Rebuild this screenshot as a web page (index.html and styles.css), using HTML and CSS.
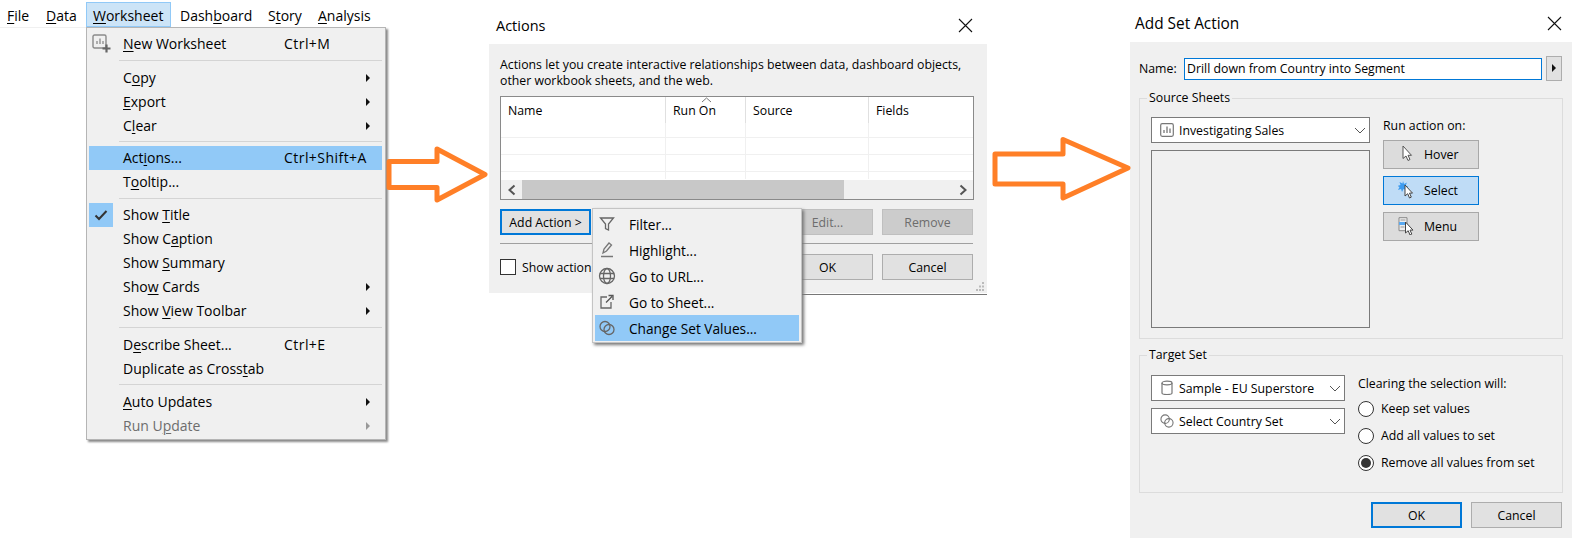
FILE: index.html
```html
<!DOCTYPE html>
<html lang="en">
<head>
<meta charset="utf-8">
<title>Add Set Action</title>
<link rel="stylesheet" href="styles.css">
</head>
<body>
<div class="canvas">

  <section class="app">
    <nav class="menubar">
      <span class="mb-item"><u>F</u>ile</span>
      <span class="mb-item"><u>D</u>ata</span>
      <span class="mb-item mb-active"><u>W</u>orksheet</span>
      <span class="mb-item">Dash<u>b</u>oard</span>
      <span class="mb-item">S<u>t</u>ory</span>
      <span class="mb-item"><u>A</u>nalysis</span>
    </nav>
    <div class="menu">
      <div class="mi">
        <svg class="mi-icon" width="20" height="20" viewBox="0 0 20 20"><rect x="1" y="1" width="13" height="13" rx="1.5" fill="none" stroke="#8a8a8a" stroke-width="1.4"/><path d="M5 10V7M8 10V4.5M11 10V7" stroke="#8a8a8a" stroke-width="1.3"/><path d="M14.5 10.5v8M10.5 14.5h8" stroke="#666" stroke-width="2.2"/></svg>
        <span class="mi-label"><u>N</u>ew Worksheet</span><span class="mi-key">Ctrl+M</span>
      </div>
      <div class="sep"></div>
      <div class="mi"><span class="mi-label">C<u>o</u>py</span><span class="mi-key"></span><i class="sub"></i></div>
      <div class="mi"><span class="mi-label"><u>E</u>xport</span><span class="mi-key"></span><i class="sub"></i></div>
      <div class="mi"><span class="mi-label">C<u>l</u>ear</span><span class="mi-key"></span><i class="sub"></i></div>
      <div class="sep sep-a"></div>
      <div class="mi mi-hot"><span class="mi-label">Act<u>i</u>ons...</span><span class="mi-key">Ctrl+Shift+A</span></div>
      <div class="mi"><span class="mi-label">T<u>o</u>oltip...</span></div>
      <div class="sep sep-b"></div>
      <div class="mi">
        <span class="mi-check"><svg width="14" height="12" viewBox="0 0 14 12"><path d="M1.5 6.5l3.5 3.5 7.5-8" fill="none" stroke="#333" stroke-width="2"/></svg></span>
        <span class="mi-label">Show <u>T</u>itle</span>
      </div>
      <div class="mi"><span class="mi-label">Show C<u>a</u>ption</span></div>
      <div class="mi"><span class="mi-label">Show <u>S</u>ummary</span></div>
      <div class="mi"><span class="mi-label">Sho<u>w</u> Cards</span><span class="mi-key"></span><i class="sub"></i></div>
      <div class="mi"><span class="mi-label">Show <u>V</u>iew Toolbar</span><span class="mi-key"></span><i class="sub"></i></div>
      <div class="sep"></div>
      <div class="mi"><span class="mi-label">D<u>e</u>scribe Sheet...</span><span class="mi-key">Ctrl+E</span></div>
      <div class="mi"><span class="mi-label">Duplicate as Cross<u>t</u>ab</span></div>
      <div class="sep sep-c"></div>
      <div class="mi"><span class="mi-label"><u>A</u>uto Updates</span><span class="mi-key"></span><i class="sub"></i></div>
      <div class="mi mi-off"><span class="mi-label">Run U<u>p</u>date</span><span class="mi-key"></span><i class="sub"></i></div>
    </div>
  </section>

  <section class="win win-actions">
    <header class="titlebar">
      <h1 class="title">Actions</h1>
      <svg class="close" width="15" height="15" viewBox="0 0 15 15"><path d="M1 1l13 13M14 1L1 14" stroke="#111" stroke-width="1.1"/></svg>
    </header>
    <div class="panel panel-actions">
      <p class="intro">Actions let you create interactive relationships between data, dashboard objects,<br>other workbook sheets, and the web.</p>
      <div class="table">
        <div class="t-row t-head">
          <span class="t-cell">Name</span>
          <span class="t-cell t-sorted">Run On<svg class="caret" width="11" height="6" viewBox="0 0 11 6"><path d="M1 5l4.5-4 4.5 4" fill="none" stroke="#777"/></svg></span>
          <span class="t-cell">Source</span>
          <span class="t-cell t-last">Fields</span>
        </div>
        <div class="t-row t-r1"><span class="t-cell"></span><span class="t-cell"></span><span class="t-cell"></span><span class="t-cell t-last"></span></div>
        <div class="t-row t-r2"><span class="t-cell"></span><span class="t-cell"></span><span class="t-cell"></span><span class="t-cell t-last"></span></div>
        <div class="t-row t-r2"><span class="t-cell"></span><span class="t-cell"></span><span class="t-cell"></span><span class="t-cell t-last"></span></div>
        <div class="t-row t-r3"><span class="t-cell"></span><span class="t-cell"></span><span class="t-cell"></span><span class="t-cell t-last"></span></div>
        <div class="scrollbar">
          <span class="sb-btn"><svg width="10" height="12" viewBox="0 0 10 12"><path d="M7.5 1.5L2.5 6l5 4.5" fill="none" stroke="#555" stroke-width="2"/></svg></span>
          <span class="sb-thumb"></span>
          <span class="sb-btn sb-end"><svg width="10" height="12" viewBox="0 0 10 12"><path d="M2.5 1.5L7.5 6l-5 4.5" fill="none" stroke="#555" stroke-width="2"/></svg></span>
        </div>
      </div>
      <div class="btn-row">
        <button class="btn btn-focus">Add Action &gt;</button>
        <button class="btn btn-off btn-push">Edit...</button>
        <button class="btn btn-off">Remove</button>
      </div>
      <div class="rule"></div>
      <div class="btn-row btn-row-foot">
        <span class="check-box"></span><span class="check-label">Show action</span>
        <button class="btn btn-push">OK</button>
        <button class="btn">Cancel</button>
      </div>
      <svg class="grip" width="12" height="12" viewBox="0 0 12 12"><path d="M8 1h2v2H8zM5 4.500h2v2H5zM8 4.500h2v2H8zM2 8h2v2H2zM5 8h2v2H5zM8 8h2v2H8z" fill="#bbb"/></svg>
      <div class="edge-line"></div>
    </div>
    <div class="popup">
      <div class="pi">
        <svg class="pi-icon" width="18" height="18" viewBox="0 0 18 18"><path d="M2.500 3h13l-5 6v6l-3-1.500V9z" fill="none" stroke="#666" stroke-width="1.300"/></svg>
        <span>Filter...</span>
      </div>
      <div class="pi">
        <svg class="pi-icon" width="18" height="18" viewBox="0 0 18 18"><path d="M5 12l1-4 5-6 2.500 2-5 6zM3 15.500h12" fill="none" stroke="#777" stroke-width="1.300"/></svg>
        <span>Highlight...</span>
      </div>
      <div class="pi">
        <svg class="pi-icon" width="18" height="18" viewBox="0 0 18 18"><g fill="none" stroke="#666" stroke-width="1.300"><circle cx="9" cy="9" r="7.500"/><ellipse cx="9" cy="9" rx="3.500" ry="7.500"/><path d="M2 6.500h14M2 11.500h14"/></g></svg>
        <span>Go to URL...</span>
      </div>
      <div class="pi">
        <svg class="pi-icon" width="18" height="18" viewBox="0 0 18 18"><path d="M9 4H3v11h10V9" fill="none" stroke="#666" stroke-width="1.300"/><path d="M8 9.500L14 3.500M10.500 2.500h4.500V7" fill="none" stroke="#555" stroke-width="1.300"/></svg>
        <span>Go to Sheet...</span>
      </div>
      <div class="pi pi-hot">
        <svg class="pi-icon" width="18" height="18" viewBox="0 0 18 18"><g fill="none" stroke="#666" stroke-width="1.300"><circle cx="7" cy="7.500" r="5"/><circle cx="11" cy="10.500" r="5"/></g></svg>
        <span>Change Set Values...</span>
      </div>
    </div>
  </section>

  <section class="win win-set">
    <header class="titlebar titlebar-set">
      <h1 class="title title-set">Add Set Action</h1>
      <svg class="close" width="15" height="15" viewBox="0 0 15 15"><path d="M1 1l13 13M14 1L1 14" stroke="#111" stroke-width="1.100"/></svg>
    </header>
    <div class="panel panel-set">
      <div class="name-row">
        <label class="name-label">Name:</label>
        <span class="name-input">Drill down from Country into Segment</span>
        <span class="name-btn"></span>
      </div>

      <fieldset class="group group-source">
        <legend>Source Sheets</legend>
        <div class="source-left">
          <div class="select select-wide">
            <svg class="sel-icon" width="14" height="14" viewBox="0 0 14 14"><rect x=".7" y=".7" width="12.600" height="12.600" rx="1.500" fill="none" stroke="#777" stroke-width="1.200"/><path d="M4 10V7M7 10V3.500M10 10V5.500" stroke="#777" stroke-width="1.300"/></svg>
            <span class="sel-text">Investigating Sales</span>
            <svg class="chev" width="12" height="7" viewBox="0 0 12 7"><path d="M1 1l5 5 5-5" fill="none" stroke="#555"/></svg>
          </div>
          <div class="listbox"></div>
        </div>
        <div class="source-right">
          <div class="run-label">Run action on:</div>
          <div class="run-btn">
            <svg class="run-icon" width="18" height="18" viewBox="0 0 18 18"><path d="M5 1v12.500l3-2.500 2 4.500 2-1-2-4.200h3.500z" fill="#fff" stroke="#555"/></svg>
            <span>Hover</span>
          </div>
          <div class="run-btn run-on">
            <svg class="run-icon" width="18" height="18" viewBox="0 0 18 18"><path d="M5 0l1 3 3-1.500-1.500 3 3 1-3 1 1 2.500-3-1-1.500 3-1-3-3 1 1.500-3-2-1 3-1-1-3 3 1.500z" fill="#3d9bef"/><path d="M7 4v11l2.700-2.300 1.800 4.300 1.800-.9-1.800-4h3z" fill="#fff" stroke="#444"/></svg>
            <span>Select</span>
          </div>
          <div class="run-btn">
            <svg class="run-icon" width="18" height="18" viewBox="0 0 18 18"><path d="M1 .7h8v13H1z" fill="#eee" stroke="#888"/><path d="M1 5h7v3H1z" fill="#5aa9f0"/><path d="M2.500 3h5M2.500 10h4" stroke="#999"/><path d="M7.500 5v11l2.700-2.300 1.800 4.300 1.800-.9-1.800-4h3z" fill="#fff" stroke="#444"/></svg>
            <span>Menu</span>
          </div>
        </div>
      </fieldset>

      <fieldset class="group group-target">
        <legend>Target Set</legend>
        <div class="target-left">
          <div class="select select-narrow">
            <svg class="sel-icon" width="14" height="16" viewBox="0 0 14 16"><path d="M2 3v10c0 2 10 2 10 0V3" fill="none" stroke="#777" stroke-width="1.200"/><ellipse cx="7" cy="3" rx="5" ry="1.800" fill="none" stroke="#777" stroke-width="1.200"/></svg>
            <span class="sel-text">Sample - EU Superstore</span>
            <svg class="chev" width="12" height="7" viewBox="0 0 12 7"><path d="M1 1l5 5 5-5" fill="none" stroke="#555"/></svg>
          </div>
          <div class="select select-narrow">
            <svg class="sel-icon" width="14" height="14" viewBox="0 0 15 15"><g fill="none" stroke="#777" stroke-width="1.200"><circle cx="5.500" cy="5.500" r="4.500"/><circle cx="9.500" cy="9.500" r="4.500"/></g></svg>
            <span class="sel-text">Select Country Set</span>
            <svg class="chev" width="12" height="7" viewBox="0 0 12 7"><path d="M1 1l5 5 5-5" fill="none" stroke="#555"/></svg>
          </div>
        </div>
        <div class="target-right">
          <div class="clear-label">Clearing the selection will:</div>
          <div class="radio-row"><span class="radio"></span><span>Keep set values</span></div>
          <div class="radio-row"><span class="radio"></span><span>Add all values to set</span></div>
          <div class="radio-row"><span class="radio radio-on"></span><span>Remove all values from set</span></div>
        </div>
      </fieldset>

      <div class="set-foot">
        <button class="btn btn-focus">OK</button>
        <button class="btn">Cancel</button>
      </div>
    </div>
  </section>

  <svg class="arrows" width="1572" height="538" viewBox="0 0 1572 538">
    <path d="M389 161.500H437V149L485 174.500 437 200V187.500H389Z" fill="#fff" stroke="#ff7f27" stroke-width="5" stroke-linejoin="round"/>
    <path d="M995 154H1063V139.500L1128 168 1063 198V184H995Z" fill="#fff" stroke="#ff7f27" stroke-width="5" stroke-linejoin="round"/>
  </svg>
</div>
</body>
</html>
```
FILE: styles.css
```css
* { box-sizing: border-box; }
html, body { margin: 0; padding: 0; background: #fff; }
body { font-family: "Open Sans", "Noto Sans", sans-serif; font-size: 12.300px; color: #000; }
.canvas { position: relative; width: 1572px; height: 538px; overflow: hidden; background: #fff; }
u { text-underline-offset: 2px; text-decoration-thickness: 1px; }
p, h1 { margin: 0; font-weight: 400; }

/* Tableau menu */
.app { position: absolute; left: 0; top: 0; width: 400px; font-size: 14px; }
.menubar { display: grid; grid-template-columns: 39px 47px 87px 88px 50px 80px; height: 28px; padding-top: 2px; border-bottom: 1px solid #f0f0f0; width: 86px; overflow: visible; }
.mb-item { height: 25px; padding-left: 7px; line-height: 27px; white-space: nowrap; }
.mb-active { width: 85px; padding-left: 6px; background: #cce4f7; border: 1px solid #91c9f7; line-height: 25px; }
.menu { width: 300px; height: 413px; margin: -1px 0 0 86px; padding: 4px 3px 0 2px; background: #f0f0f0; border: 1px solid #b5b5b5; box-shadow: 2px 2px 2px #8a8a8a; }
.mi { position: relative; display: flex; align-items: center; height: 24px; padding: 0 0 1px 34px; white-space: nowrap; }
.mi-hot { background: #91c9f7; }
.mi-off { color: #6d6d6d; }
.mi-label { width: 161px; }
.mi-key { width: 82px; letter-spacing: .45px; }
.mi-icon { position: absolute; left: 3px; top: 2px; }
.mi-check { position: absolute; left: 0; top: 0; display: flex; align-items: center; justify-content: center; width: 24px; height: 24px; background: #91c9f7; }
.sub { width: 0; height: 0; border-left: 4px solid #111; border-top: 4px solid transparent; border-bottom: 4px solid transparent; }
.mi-off .sub { border-left-color: #999; }
.sep { height: 1px; margin: 4px 0 5px 30px; background: #d4d4d4; }
.sep-a { margin: 3px 0 4px 30px; }
.sep-b { margin: 4px 0 4px 30px; }
.sep-c { margin: 3px 0 5px 30px; }

/* Dialog shells */
.win { position: absolute; top: 0; }
.win-actions { left: 489px; width: 498px; height: 293px; }
.win-set { left: 1130px; width: 442px; height: 538px; }
.titlebar { display: flex; align-items: center; justify-content: space-between; height: 44px; padding: 6px 14px 0 7px; }
.titlebar-set { height: 42px; padding: 4px 10px 0 5px; }
.title { font-size: 14.500px; }
.title-set { font-size: 15.400px; }
.close { display: block; }
.panel { position: relative; background: #f0f0f0; }
.panel-actions { height: 249px; padding: 13px 14px 0 11px; }
.panel-set { height: 496px; padding: 14px 9px 0; }

/* Actions dialog */
.intro { line-height: 16px; white-space: nowrap; }
.table { width: 474px; height: 104px; margin-top: 7px; background: #fff; border: 1px solid #8a8a8a; }
.t-row { display: grid; grid-template-columns: 165px 80px 123px 1fr; }
.t-cell { position: relative; padding-left: 7px; border-right: 1px solid #f0f0f0; }
.t-last { border-right: 0; }
.t-head { height: 26px; line-height: 28px; }
.t-head .t-cell { border-right-color: #e0e0e0; }
.t-r1 { height: 15px; border-bottom: 1px solid #f0f0f0; }
.t-r2 { height: 17px; border-bottom: 1px solid #f0f0f0; }
.t-r3 { height: 7px; }
.caret { position: absolute; left: 35px; top: 0; }
.scrollbar { display: flex; height: 19px; margin-top: 1px; background: #f0f0f0; }
.sb-btn { display: flex; align-items: center; justify-content: center; width: 21px; }
.sb-thumb { width: 322px; background: #c8c8c8; }
.sb-end { margin-left: auto; }
.btn-row { display: flex; align-items: center; gap: 9px; margin-top: 9px; }
.btn-row-foot { margin-top: 10px; }
.btn { width: 91px; height: 26px; padding: 0; font: inherit; color: #000; background: #e1e1e1; border: 1px solid #adadad; }
.btn-focus { border: 2px solid #0078d7; }
.btn-off { color: #6d6d6d; background: #cccccc; border-color: #bfbfbf; }
.btn-push { margin-left: auto; }
.rule { height: 1px; margin-top: 8px; background: #a0a0a0; }
.check-box { width: 16px; height: 16px; background: #fff; border: 1px solid #333; }
.check-label { margin-left: -3px; }
.grip { position: absolute; right: 1px; bottom: 0; }
.edge-line { position: absolute; left: 313px; right: 0; bottom: -2px; height: 1px; background: #777; }
.popup { position: absolute; left: 103px; top: 208px; width: 210px; height: 135px; padding: 2px; background: #f0f0f0; border: 1px solid #c4c4c4; box-shadow: 2px 2px 3px #777; font-size: 13.700px; }
.pi { display: flex; align-items: center; height: 26px; padding-left: 34px; position: relative; white-space: nowrap; }
.pi-hot { background: #91c9f7; }
.pi-icon { position: absolute; left: 3px; top: 4px; }

/* Add Set Action dialog */
.name-row { display: flex; align-items: center; height: 25px; }
.name-label { width: 45px; }
.name-input { width: 358px; height: 22px; margin-right: 4px; padding-left: 2px; line-height: 20px; background: #fff; border: 1px solid #0078d7; white-space: nowrap; }
.name-btn { position: relative; width: 16px; height: 25px; background: #e1e1e1; border: 1px solid #adadad; }
.name-btn::after { content: ""; position: absolute; left: 5px; top: 7px; border-left: 4px solid #111; border-top: 4px solid transparent; border-bottom: 4px solid transparent; }
.group { display: flex; min-width: 0; margin: 0; padding: 0 0 0 11px; width: 424px; border: 1px solid #dcdcdc; }
.group legend { margin-left: -4px; padding: 0 2px; line-height: 16px; }
.group-source { height: 249px; margin-top: 9px; padding-top: 11px; }
.group-target { height: 146px; margin-top: 8px; padding-top: 12px; }
.select { display: flex; align-items: center; height: 26px; padding-left: 8px; background: #fff; border: 1px solid #7a7a7a; }
.select-wide { width: 219px; }
.select-narrow { width: 194px; }
.select-narrow + .select-narrow { margin-top: 7px; }
.sel-icon { flex: none; }
.sel-text { margin-left: 5px; white-space: nowrap; }
.chev { flex: none; margin-left: auto; margin-right: 3px; }
.listbox { width: 219px; height: 178px; margin-top: 7px; background: #f0f0f0; border: 1px solid #7a7a7a; }
.source-right { margin-left: 13px; width: 96px; }
.run-label { height: 17px; margin-bottom: 6px; line-height: 17px; white-space: nowrap; }
.run-btn { position: relative; display: flex; align-items: center; height: 29px; margin-bottom: 7px; padding-left: 40px; background: #dcdcdc; border: 1px solid #a8a8a8; }
.run-on { background: #bfdcf6; border-color: #0078d7; }
.run-icon { position: absolute; left: 14px; top: 4px; }
.target-right { margin-left: 13px; }
.clear-label { height: 17px; margin-bottom: 3px; line-height: 17px; white-space: nowrap; }
.radio-row { display: flex; align-items: center; gap: 7px; height: 27px; white-space: nowrap; }
.radio { position: relative; width: 16px; height: 16px; background: #fff; border: 1px solid #333; border-radius: 50%; }
.radio-on::after { content: ""; position: absolute; left: 2px; top: 2px; width: 10px; height: 10px; background: #333; border-radius: 50%; }
.set-foot { display: flex; justify-content: flex-end; gap: 9px; margin: 9px 1px 0 0; }

/* Annotation arrows */
.arrows { position: absolute; left: 0; top: 0; pointer-events: none; }
```
